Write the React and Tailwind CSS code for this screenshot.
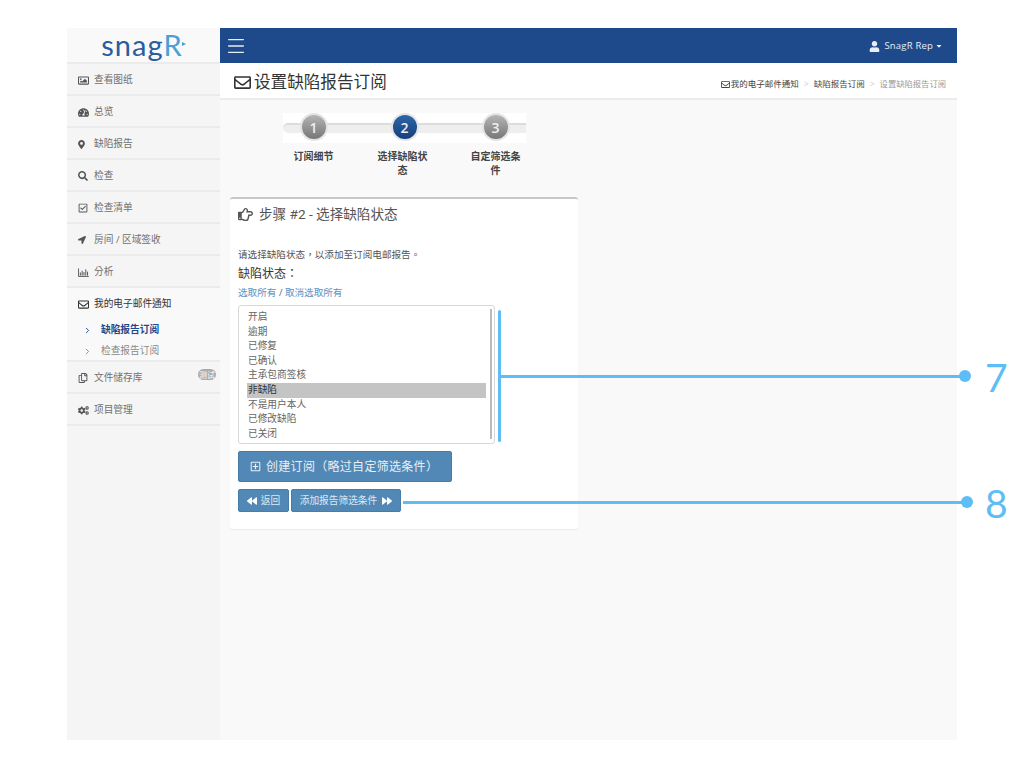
import React from "react";
import { FaRegImage, FaTachometerAlt, FaMapMarkerAlt, FaSearch, FaRegCheckSquare, FaLocationArrow, FaRegEnvelope, FaRegCopy, FaCogs, FaRegHandPointRight, FaBackward, FaForward, FaRegPlusSquare, FaUser, FaCaretDown } from "react-icons/fa";
import { Menu, ChevronRight } from "lucide-react";

function BarsIcon({ className }) {
  return (
    <svg viewBox="0 0 12 10" className={className} fill="none" stroke="currentColor">
      <path d="M0.5 0.5V9.5H12" strokeWidth="1" />
      <path d="M2.5 8.5V5M4.5 8.5V3M6.5 8.5V4.5M8.5 8.5V1.5M10.5 8.5V4" strokeWidth="1.1" />
    </svg>
  );
}

const items = [
  [FaRegImage, "查看图纸", "text-[11px]"],
  [FaTachometerAlt, "总览", "text-[11px]"],
  [FaMapMarkerAlt, "缺陷报告", "text-[9px] -ml-[1px]"],
  [FaSearch, "检查", "text-[10px]"],
  [FaRegCheckSquare, "检查清单", "text-[10px]"],
  [FaLocationArrow, "房间 / 区域签收", "text-[8px]"],
  [BarsIcon, "分析", "w-[11px] h-[9px]"],
];
const options = ["开启", "逾期", "已修复", "已确认", "主承包商签核", "非缺陷", "不是用户本人", "已修改缺陷", "已关闭"];

function Row({ icon: Icon, label, iconClass, children }) {
  return (
    <div className="h-8 flex items-center border-b-2 border-[#ebebeb] pl-[11px] pr-1 pt-[2px] text-[#707070]">
      <span className="w-[16px] flex items-center text-[#555]"><Icon className={iconClass} /></span>
      <span>{label}</span>
      {children}
    </div>
  );
}

function Step({ n, label, active, labelClass }) {
  return (
    <div className="w-[91px] flex flex-col items-center">
      <div className={`w-[28px] h-[28px] rounded-full border-2 border-[#e4e4e4] flex items-center justify-center text-[14px] font-semibold text-[#eee] ${active ? "bg-gradient-to-b from-[#2c66a8] to-[#163f7c]" : "bg-gradient-to-b from-[#b5b5b5] to-[#777]"}`}>
        {n}
      </div>
      <div className={`mt-[9px] w-[56px] text-center text-[10px] leading-[13.5px] font-semibold text-[#444] ${labelClass || ""}`}>{label}</div>
    </div>
  );
}

export default function App() {
  return (
    <div className="relative w-[1024px] h-[768px] bg-white overflow-hidden pt-[28px] pl-[67px] font-['Open_Sans','Noto_Sans_CJK_TC',sans-serif]">
      <div className="w-[890px] h-[712px] flex text-[9.7px]">
        <aside className="w-[153px] shrink-0 bg-[#f5f5f5] flex flex-col">
          <div className="h-[36px] bg-[#f9f9f9] border-b-2 border-[#ebebeb] flex items-center justify-center pb-[1px]">
            <span className="font-['Lato',sans-serif] text-[29px] leading-none tracking-[1px] text-[#2a5d9c]">snag<span className="text-[#4a9fd8] tracking-normal">R</span></span>
            <svg viewBox="0 0 4 4" className="w-[4px] h-[4px] mb-[2px] text-[#4a9fd8]" fill="currentColor"><path d="M0 0L4 2L0 4Z" /></svg>
          </div>
          {items.map(([I, l, c]) => <Row key={l} icon={I} label={l} iconClass={c} />)}
          <div className="h-[74px] bg-[#f9f9f9] border-b-2 border-[#ebebeb]">
            <div className="h-[32px] pt-[1px] flex items-center pl-[11px] text-[#333]">
              <span className="w-[16px] flex items-center"><FaRegEnvelope className="text-[11px]" /></span>
              <span>我的电子邮件通知</span>
            </div>
            <div className="h-[21px] flex items-center pl-[16px] font-bold text-[#1e4a8b]">
              <ChevronRight className="w-[9px] h-[9px] mr-[9px]" strokeWidth={2.5} />
              <span>缺陷报告订阅</span>
            </div>
            <div className="h-[21px] flex items-center pl-[16px] text-[#888]">
              <ChevronRight className="w-[9px] h-[9px] mr-[9px]" strokeWidth={2.5} />
              <span>检查报告订阅</span>
            </div>
          </div>
          <Row icon={FaRegCopy} label="文件储存库" iconClass="text-[10px]">
            <span className="ml-auto mb-[7px] h-[11px] w-[18px] rounded-full bg-[#aaa] text-white text-[8px] leading-[11px] text-center">测试</span>
          </Row>
          <Row icon={FaCogs} label="项目管理" iconClass="text-[11px]" />
        </aside>

        <div className="flex-1 flex flex-col bg-[#f9f9f9]">
          <div className="h-[35px] bg-[#1e4a8b] flex items-center justify-between pl-[5px] pr-[14px] text-white">
            <Menu className="w-[22px] h-[22px] text-[#e6edf5]" strokeWidth={1.5} />
            <div className="flex items-center pt-[1px] text-[9.5px] tracking-[0.2px] text-[#e8eef5]">
              <FaUser className="text-[11px] mr-[4px]" />
              <span>SnagR Rep</span>
              <FaCaretDown className="text-[8px] ml-[2px]" />
            </div>
          </div>
          <div className="h-[37px] bg-white border-b-2 border-[#ececec] flex items-center justify-between pl-[14px] pr-[11px]">
            <div className="flex items-center pt-[4px] text-[16.6px] text-[#333]">
              <FaRegEnvelope className="text-[17px] mr-[3px]" />
              <span>设置缺陷报告订阅</span>
            </div>
            <div className="flex items-center pt-[8px] text-[8.5px] text-[#444]">
              <FaRegEnvelope className="text-[9px] mr-[1px]" />
              <span>我的电子邮件通知</span>
              <span className="mx-[5px] text-[#ccc]">&gt;</span>
              <span>缺陷报告订阅</span>
              <span className="mx-[5px] text-[#ccc]">&gt;</span>
              <span className="text-[8.3px] text-[#999]">设置缺陷报告订阅</span>
            </div>
          </div>

          <div className="pl-[10px] flex-1">
            <div className="relative ml-[53px] mt-[13px] w-[243px] h-[30px] bg-white">
              <div className="absolute left-0 right-0 top-[10px] h-[10px] rounded-l-full bg-[#eee] border-t-2 border-[#dcdcdc]" />
            </div>
            <div className="flex ml-[38px] mt-[-30px] relative">
              <Step n="1" label="订阅细节" />
              <Step n="2" label="选择缺陷状态" active labelClass="mr-[4px]" />
              <Step n="3" label="自定筛选条件" />
            </div>

            <div className="mt-[20px] w-[348px] h-[332px] bg-white border-t-2 border-[#c8c8c8] rounded-[3px] shadow-[0_1px_1px_rgba(0,0,0,0.06)] px-[8px]">
              <div className="flex items-center h-[28px] pt-[2px] font-['Roboto','Noto_Sans_CJK_TC',sans-serif] text-[13.6px] text-[#555]">
                <FaRegHandPointRight className="text-[15px] mr-[6px]" />
                <span>步骤 #2 - 选择缺陷状态</span>
              </div>
              <p className="mt-[21px] text-[9.6px] leading-[14px] text-[#555]">请选择缺陷状态，以添加至订阅电邮报告。</p>
              <p className="mt-[3px] text-[12px] leading-[18px] text-[#333]">缺陷状态：</p>
              <p className="mt-[2px] text-[9.6px] leading-[16px] text-[#5a93c4]">选取所有 <span className="text-[#666]">/</span> 取消选取所有</p>
              <div className="mt-[4px] w-[257px] h-[139px] border border-[#d8d8d8] rounded-[3px] flex pl-[8px] pt-[3px] pr-[2px]">
                <div className="flex-1 pt-[1px]">
                  {options.map((o) => (
                    <div key={o} className={`h-[14.6px] leading-[14.6px] pl-[1px] mr-[4px] ${o === "非缺陷" ? "bg-[#c4c4c4] text-[#333]" : "text-[#666]"}`}>{o}</div>
                  ))}
                </div>
                <div className="w-[2px] h-[130px] bg-[#bbb]" />
              </div>
              <button className="mt-[7px] w-[214px] h-[31px] flex items-center pl-[11px] bg-[#5288b6] border border-[#4a7ca8] rounded-[2px] text-[12px] tracking-[0.3px] text-[#e8eff5]">
                <FaRegPlusSquare className="text-[11px] mr-[5px]" />
                <span>创建订阅（略过自定筛选条件）</span>
              </button>
              <div className="mt-[7px] flex gap-[2px]">
                <button className="w-[51px] h-[23px] flex items-center justify-center bg-[#5288b6] border border-[#4a7ca8] rounded-[2px] text-[#dfe8f1]">
                  <FaBackward className="text-[10px] mr-[4px] text-white" />
                  <span className="pt-[2px]">返回</span>
                </button>
                <button className="w-[110px] h-[23px] flex items-center justify-center bg-[#5288b6] border border-[#4a7ca8] rounded-[2px] text-[#dfe8f1]">
                  <span className="pt-[2px]">添加报告筛选条件</span>
                  <FaForward className="text-[10px] ml-[5px] text-white" />
                </button>
              </div>
            </div>
          </div>
        </div>
      </div>

      <div className="absolute left-[498px] top-[310px] w-[3px] h-[132px] rounded-sm bg-[#5fbdf6]" />
      <div className="absolute left-[500px] top-[375px] w-[465px] h-[2.5px] bg-[#5fbdf6]" />
      <div className="absolute left-[959px] top-[370px] w-[12px] h-[12px] rounded-full bg-[#5fbdf6]" />
      <div className="absolute left-[985px] top-[355px] text-[39px] leading-[44px] font-['Lato',sans-serif] font-normal text-[#5fbdf6]">7</div>
      <div className="absolute left-[403px] top-[501px] w-[562px] h-[2.5px] bg-[#5fbdf6]" />
      <div className="absolute left-[961px] top-[496px] w-[12px] h-[12px] rounded-full bg-[#5fbdf6]" />
      <div className="absolute left-[985px] top-[481px] text-[39px] leading-[44px] font-['Lato',sans-serif] font-normal text-[#5fbdf6]">8</div>
    </div>
  );
}
